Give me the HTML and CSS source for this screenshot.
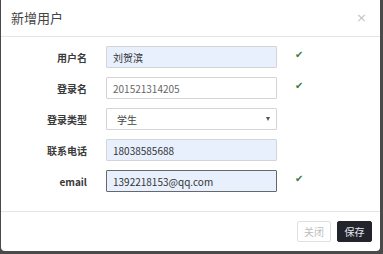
FILE: index.html
```html
<!DOCTYPE html>
<html lang="zh-CN">
<head>
    <meta charset="UTF-8">
    <title>新增用户</title>
    <link rel="stylesheet" href="styles.css">
</head>
<body>
    <div class="modal">
        <div class="modal-header">
            <h4>新增用户</h4>
            <span class="close">&times;</span>
        </div>
        <form class="modal-body">
            <div class="row">
                <label>用户名</label>
                <input class="autofill" type="text" value="刘贺滨">
                <span class="ok">&#10004;</span>
            </div>
            <div class="row">
                <label>登录名</label>
                <input type="text" value="201521314205">
                <span class="ok">&#10004;</span>
            </div>
            <div class="row">
                <label>登录类型</label>
                <div class="select">学生<span class="caret"></span></div>
            </div>
            <div class="row">
                <label>联系电话</label>
                <input class="autofill" type="text" value="18038585688">
            </div>
            <div class="row">
                <label>email</label>
                <input class="autofill focus" type="text" value="1392218153@qq.com">
                <span class="ok">&#10004;</span>
            </div>
        </form>
        <div class="modal-footer">
            <button class="btn btn-default">关闭</button>
            <button class="btn btn-dark">保存</button>
        </div>
    </div>
</body>
</html>
```
FILE: styles.css
```css
* {
    margin: 0;
    padding: 0;
    box-sizing: border-box;
}

body {
    font-family: "Noto Sans CJK SC", "Noto Sans", sans-serif;
    background: #4a4a4a;
    width: 383px;
    height: 254px;
    overflow: hidden;
}

.modal {
    margin-left: 1px;
    width: 379px;
    height: 251px;
    background: #fff;
    border-radius: 0 0 4px 4px;
    display: flex;
    flex-direction: column;
}

.modal-header {
    height: 37px;
    border-bottom: 1px solid #e5e5e5;
    display: flex;
    align-items: center;
    justify-content: space-between;
    padding: 0 10px 2px 10px;
}

.modal-header h4 {
    font-size: 13px;
    font-weight: normal;
    color: #444;
}

.close {
    font-family: "DejaVu Sans", sans-serif;
    font-size: 13px;
    color: #c4c4c4;
    margin-right: 3px;
}

.modal-body {
    flex: 1;
    padding-top: 9px;
    display: flex;
    flex-direction: column;
    gap: 9px;
}

.row {
    display: flex;
    align-items: center;
    height: 22px;
}

.row label {
    width: 86px;
    text-align: right;
    font-size: 10px;
    font-weight: bold;
    color: #3a3a3a;
}

.row input,
.select {
    margin-left: 19px;
    width: 171px;
    height: 22px;
    border: 1px solid #d4d4d4;
    border-radius: 1px;
    padding: 0 6px;
    font-family: inherit;
    font-size: 10px;
    color: #666;
    background: #fff;
    outline: none;
}

.row input.autofill {
    background: #e8f0fe;
    color: #333;
}

.row input.focus {
    border-color: #66686c;
}

.select {
    display: flex;
    align-items: center;
    justify-content: space-between;
    padding: 0 6px 0 10px;
    color: #444;
}

.caret {
    width: 0;
    height: 0;
    border-left: 2.5px solid transparent;
    border-right: 2.5px solid transparent;
    border-top: 4px solid #555;
}

.ok {
    margin-left: 18px;
    margin-top: -6px;
    font-size: 10px;
    color: #3c7a3d;
    font-family: "DejaVu Sans", sans-serif;
}

.modal-footer {
    height: 40px;
    border-top: 1px solid #e5e5e5;
    display: flex;
    justify-content: flex-end;
    align-items: center;
    gap: 6px;
    padding: 0 8px 0 0;
}

.btn {
    height: 21px;
    padding: 0 6px;
    font-family: inherit;
    font-size: 10px;
    border-radius: 2px;
    cursor: pointer;
}

.btn-default {
    width: 34px;
    background: #fff;
    border: 1px solid #e0e0e0;
    color: #bcbcbc;
}

.btn-dark {
    width: 35px;
    background: #23232b;
    border: 1px solid #23232b;
    color: #e6e6f0;
}
```
